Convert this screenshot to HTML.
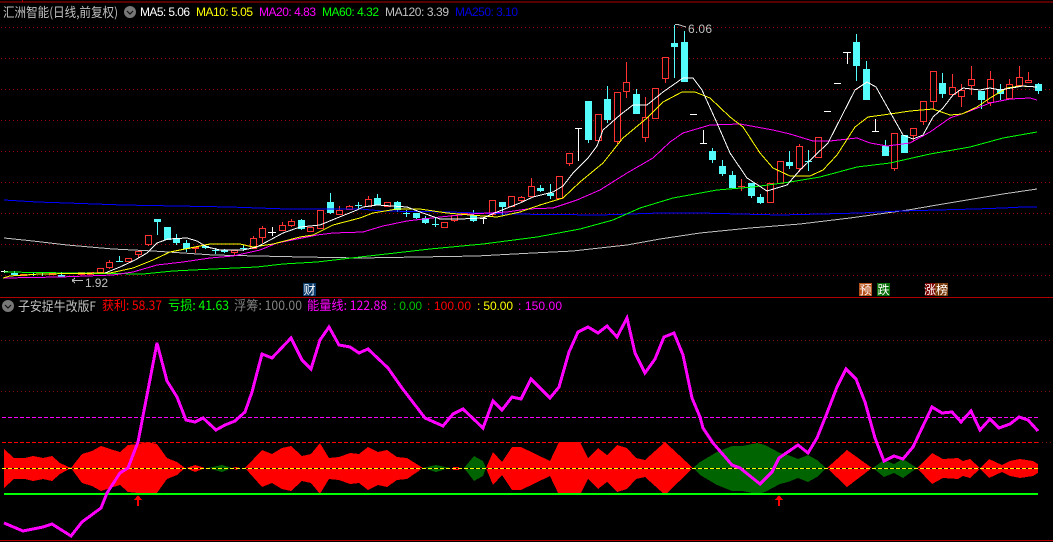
<!DOCTYPE html>
<html><head><meta charset="utf-8"><style>
html,body{margin:0;padding:0;background:#000;width:1053px;height:542px;overflow:hidden}
svg{display:block}
text{font-family:"Liberation Sans","WenQuanYi Zen Hei","Noto Sans CJK SC",sans-serif;font-size:12px}
.cj{font-family:"WenQuanYi Zen Hei","Noto Sans CJK SC",sans-serif;font-size:13px}
</style></head><body>
<svg width="1053" height="542" viewBox="0 0 1053 542" xmlns="http://www.w3.org/2000/svg">
<rect width="1053" height="542" fill="#000"/>
<g shape-rendering="crispEdges" fill="none">
<path d="M0 2H1053M22.5 0V2M0 297.5H1053M0 540.5H1053" stroke="#b00000"/>
<path d="M1 27.5H1053M1 58.5H1053M1 89.5H1053M1 120.5H1053M1 151.5H1053M1 182.5H1053M1 213.5H1053M1 244.5H1053M1 275.5H1053" stroke="#a00000" stroke-dasharray="1 3"/>
<path d="M1 340.5H1053M1 391.5H1053M1038 442.5H1053" stroke="#7a1500" stroke-dasharray="1 3"/>

<!-- red candles -->
<path stroke="#ff3232" fill="#000" d="M20.5 274.5h6V275.5h-6zM49.5 273.5h6V274.5h-6zM78.5 272.5h6V274.5h-6zM87.5 272.5h6V274.5h-6zM97.5 268.5h6V272.5h-6zM106.5 262.5h6V267.5h-6zM125.5 258.5h6V261.5h-6zM135.5 251.5h6V254.5h-6zM145.5 235.5h6V244.5h-6zM192.5 247.5h6V248.5h-6zM231.5 250.5h6V252.5h-6zM250.5 238.5h6V248.5h-6zM259.5 228.5h6V237.5h-6zM279.5 225.5h6V230.5h-6zM288.5 221.5h6V225.5h-6zM307.5 227.5h6V231.5h-6zM317.5 210.5h6V228.5h-6zM336.5 210.5h6V214.5h-6zM346.5 206.5h6V209.5h-6zM365.5 199.5h6V206.5h-6zM384.5 202.5h6V206.5h-6zM441.5 222.5h6V227.5h-6zM451.5 215.5h6V220.5h-6zM461.5 213.5h6V214.5h-6zM489.5 200.5h6V214.5h-6zM508.5 196.5h6V206.5h-6zM518.5 197.5h6V200.5h-6zM528.5 186.5h6V196.5h-6zM556.5 176.5h6V198.5h-6zM566.5 153.5h6V163.5h-6zM595.5 114.5h6V140.5h-6zM614.5 92.5h6V141.5h-6zM623.5 82.5h6V91.5h-6zM642.5 117.5h6V137.5h-6zM652.5 88.5h6V118.5h-6zM662.5 57.5h6V78.5h-6zM767.5 183.5h6V202.5h-6zM777.5 161.5h6V183.5h-6zM796.5 146.5h6V168.5h-6zM815.5 137.5h6V157.5h-6zM891.5 133.5h6V168.5h-6zM910.5 128.5h6V135.5h-6zM920.5 101.5h6V121.5h-6zM930.5 71.5h6V101.5h-6zM949.5 87.5h6V94.5h-6zM958.5 90.5h6V96.5h-6zM968.5 79.5h6V85.5h-6zM987.5 79.5h6V102.5h-6zM1006.5 84.5h6V98.5h-6zM1016.5 77.5h6V85.5h-6zM1025.5 80.5h6V82.5h-6z"/>
<path stroke="#ff3232" d="M109.5 260V262M109.5 268V269M138.5 255V258M148.5 245V246M195.5 249V253M234.5 253V255M253.5 236V238M262.5 226V228M262.5 238V243M282.5 222V225M291.5 219V221M291.5 226V227M339.5 206V210M349.5 205V206M368.5 196V199M454.5 221V222M492.5 215V217M521.5 196V197M521.5 201V203M531.5 178V186M569.5 164V166M617.5 142V144M626.5 62V82M626.5 92V98M645.5 97V117M645.5 138V142M665.5 79V83M741.5 179V191M738 186.5H745M799.5 144V146M799.5 169V172M894.5 169V171M913.5 136V141M923.5 122V125M933.5 102V109M952.5 74V87M952.5 95V96M961.5 84V90M961.5 97V107M971.5 66V79M971.5 86V95M990.5 71V79M990.5 103V106M1009.5 79V84M1019.5 66V77M1028.5 72V80"/>

<!-- cyan wicks -->
<path stroke="#54fcfc" d="M14.5 271V275M33.5 272V276M42.5 272V276M61.5 272V277M119.5 256V262M116 261.5H123M157.5 222V235M176.5 234V245M186.5 240V252M205.5 245V249M215.5 248V254M212 250.5H219M224.5 249V253M243.5 245V251M240 248.5H247M301.5 219V230M330.5 193V214M358.5 202V209M355 205.5H362M377.5 194V198M397.5 201V212M406.5 210V217M403 213.5H410M416.5 218V219M425.5 216V224M435.5 218V227M432 224.5H439M473.5 210V222M502.5 207V215M540.5 185V192M550.5 184V199M588.5 140V143M607.5 86V123M636.5 89V94M674.5 25V78M684.5 31V42M712.5 148V163M722.5 160V176M732.5 171V189M751.5 196V198M760.5 194V204M789.5 151V169M808.5 150V171M805 161.5H812M856.5 34V81M866.5 61V69M885.5 140V146M942.5 73V98M981.5 100V109M1000.5 84V100M1038.5 83V94"/>
<!-- cyan bodies -->
<path stroke="#54fcfc" stroke-width="7" d="M14.5 273V275M61.5 275V277M157.5 219V222M167.5 227V240M176.5 239V243M186.5 243V249M205.5 246V248M224.5 250V252M301.5 220V229M330.5 202V213M377.5 198V205M397.5 202V210M416.5 213V218M425.5 218V223M473.5 215V221M502.5 202V207M540.5 188V191M550.5 193V196M588.5 101V140M607.5 99V120M636.5 94V114M674.5 43V47M684.5 42V82M712.5 151V160M722.5 166V174M732.5 175V188M751.5 183V196M760.5 197V203M789.5 162V166M856.5 42V66M866.5 69V100M885.5 146V156M904.5 135V153M942.5 83V94M981.5 91V100M1000.5 89V94M1038.5 84V91"/>
<!-- white doji -->
<path stroke="#fff" d="M1 271.5H8M4.5 270V273M268 232.5H276M272.5 227V236M480 218.5H487M483.5 217V224M575 128.5H582M578.5 128V161M690 114.5H697M703.5 130V143M700 143.5H707M824 111.5H831M834 83.5H841M843 52.5H851M847.5 52V64M875.5 119V131M872 131.5H879"/>

<!-- moving averages -->
<polyline stroke="#c0c0c0" stroke-width="1" points="4,238 33,241 67,245 113,249 153,251 213,255 303,257 360,258 477,256 533,253 573,251 627,245 660,239 700,233 750,228 800,224 850,218 908,210 937,205 1003,194 1037,189"/>
<polyline stroke="#0000ff" stroke-width="1" points="4,200 37,202 67,203 123,205 230,207 287,209 360,209 383,211 450,212 507,214 600,215 660,213 700,213 780,215 860,213 900,211 975,209 1003,208 1023,207 1037,207"/>
<polyline stroke="#00ff00" stroke-width="1" points="4,272 143,274 173,271 213,269 257,267 283,264 317,262 360,257 430,249 483,244 537,237 580,229 613,220 640,208 673,198 717,190 753,187 790,182 820,177 857,167 890,163 930,154 970,147 1003,138 1037,132"/>
<polyline stroke="#ff00ff" stroke-width="1" points="4,278 60,277 113,275 133,272 157,265 183,262 210,258 233,256 260,250 277,243 317,235 333,233 363,232 383,226 407,221 440,217 470,214 507,212 527,209 553,208 577,200 600,190 627,173 653,158 670,142 683,133 710,125 740,124 773,130 790,134 813,141 830,141 857,138 870,143 887,146 910,143 930,132 950,118 970,111 990,103 1010,99 1030,98 1037,100"/>
<polyline stroke="#ffff00" stroke-width="1" points="3,278 10,276 40,274 110,273 133,268 153,260 170,252 190,248 210,244 240,244 253,247 273,244 300,237 313,235 333,225 360,218 373,213 397,209 420,209 447,213 470,215 497,217 520,212 540,205 563,198 580,182 603,163 623,138 647,118 663,102 682,92 695,92 710,98 730,117 743,127 760,153 773,168 790,176 810,176 823,170 837,155 855,127 868,117 890,114 910,111 933,109 950,115 962,114 977,107 990,98 1007,88 1020,86 1037,87"/>
<polyline stroke="#ffffff" stroke-width="1" points="105,273 120,267 135,260 147,253 157,243 168,239 187,238 197,241 207,247 220,250 243,250 257,247 283,233 300,227 320,225 337,218 357,210 363,207 377,205 407,207 420,212 440,219 460,219 483,218 497,212 520,203 533,197 553,192 563,186 573,173 588,158 597,146 603,130 620,115 633,105 647,105 663,92 683,78 693,78 702,90 717,123 730,153 747,178 767,191 787,185 800,170 828,143 855,90 867,82 876,87 903,135 913,139 923,135 933,117 943,108 953,95 963,88 980,90 990,88 1000,90 1023,86 1037,87"/>

<!-- lower pane envelope -->
<g stroke="none">
<polygon fill="#ff0000" points="4,449 14,458 25,458 33,456 43,458 52,456 60,463 71,468 60,474 52,481 43,479 33,481 25,479 14,479 4,488"/>
<polygon fill="#ff0000" points="71,468 82,454 92,451 101,446 110,449 120,452 128,445 138,444 147,442 157,444 167,458 177,462 185,468 177,475 167,479 157,493 147,495 138,493 128,492 120,485 110,488 101,491 92,486 82,483"/>
<polygon fill="#ff0000" points="186,468 195,465 205,468 195,472"/>
<polygon fill="#006400" points="207,468 222,465 232,468 222,472"/>
<polygon fill="#ff0000" points="232,468 236,467 240,468 236,470"/>
<polygon fill="#ff0000" points="245,468 262,450 272,454 282,448 291,446 302,456 311,454 320,443 329,458 339,457 350,453 359,454 368,447 378,452 387,450 397,457 407,458 423,468 407,479 397,480 387,487 378,485 368,490 359,483 350,484 339,480 329,479 320,494 311,483 302,481 291,491 282,489 272,483 262,487"/>
<polygon fill="#006400" points="423,468 436,465 450,468 436,472"/>
<polygon fill="#ff0000" points="453,467 459,467 459,470 453,470"/>
<polygon fill="#006400" points="464,468 474,456 483,461 486,468 483,476 474,481"/>
<polygon fill="#ff0000" points="486,468 493,452 502,462 512,447 521,447 550,461 559,442 580,442 588,458 598,448 607,455 617,445 627,448 636,458 645,460 665,442 693,468 665,495 645,477 636,479 627,489 617,492 607,482 598,489 588,479 580,495 559,495 550,476 521,490 512,490 502,475 493,485"/>
<polygon fill="#006400" points="693,468 700,462 717,452 732,446 742,446 757,443 765,445 780,453 788,455 798,459 808,455 817,460 826,468 817,477 808,482 798,478 788,482 780,484 765,492 757,494 742,491 732,491 717,485 700,475"/>
<polygon fill="#ff0000" points="827,468 847,450 872,468 847,487"/>
<polygon fill="#006400" points="873,468 884,460 894,464 903,459 917,468 903,478 894,473 884,477"/>
<polygon fill="#ff0000" points="917,468 932,453 943,459 958,458 963,461 970,459 980,468 989,459 1002,465 1010,461 1020,459 1033,461 1038,464 1038,473 1033,476 1020,478 1010,476 1002,472 989,478 980,469 970,478 963,476 958,479 943,478 932,484"/>
</g>
<path stroke="#ff00ff" stroke-dasharray="4 2" d="M2 417.5H1038"/>
<path stroke="#ff0000" stroke-dasharray="4 2" d="M2 442.5H1038"/>
<path stroke="#000" d="M2 468.5H1038"/>
<path stroke="#ffff00" stroke-dasharray="4 2" d="M2 468.5H1038"/>
<path stroke="#00ff00" stroke-width="2" d="M4 494H1038"/>
<polyline stroke="#ff00ff" stroke-width="3" points="4,523 23,531 43,527 52,524 71,536 82,522 101,508 107,493 120,473 128,468 138,442 157,343 167,381 177,397 186,420 195,422 203,418 216,430 225,425 235,421 245,412 252,392 262,354 272,358 291,338 302,360 311,369 320,340 329,327 339,345 350,347 359,353 368,349 388,368 402,388 425,418 443,426 453,414 463,409 483,428 493,401 502,410 512,397 521,399 531,379 550,398 559,387 569,352 578,332 588,327 598,333 607,326 617,337 627,318 635,353 645,373 655,359 664,337 674,333 683,355 692,398 700,417 703,428 713,443 732,465 740,468 760,484 772,472 779,458 798,445 808,453 817,438 827,413 837,387 846,369 856,379 865,402 875,438 884,461 894,456 903,459 913,447 932,407 942,413 952,412 961,422 971,411 980,430 990,419 999,428 1010,424 1019,417 1028,420 1038,431"/>
<polygon fill="#ff0000" points="134,500 138,495 142,500 139,500 139,506 137,506 137,500"/>
<polygon fill="#ff0000" points="775,500 779,495 783,500 780,500 780,506 778,506 778,500"/>
<path stroke="#c0c0c0" d="M72 280.5H83M72 280.5L75 278M72 280.5L75 283M675 24.5H678M678 24.5L686 27"/>
<!-- signal tags -->
<rect x="303" y="283" width="13" height="13" fill="#0a3a6a" stroke="none"/>
<rect x="859" y="283" width="13" height="13" fill="#b5521b" stroke="none"/>
<rect x="877" y="283" width="13" height="13" fill="#0a6e0a" stroke="none"/>
<rect x="925" y="283" width="10" height="13" fill="#7a0000" stroke="none"/>
<rect x="935" y="283" width="13" height="13" fill="#7a3a0a" stroke="none"/>
</g>

<!-- header icons -->
<circle cx="130" cy="12" r="6" fill="#777"/><path d="M127 11l3 3 3-3" stroke="#111" stroke-width="1.2" fill="none"/>
<circle cx="8" cy="306" r="6" fill="#777"/><path d="M5 305l3 3 3-3" stroke="#111" stroke-width="1.2" fill="none"/>

<!-- text -->
<text class="cj" x="3" y="17" fill="#c0c0c0" textLength="115" lengthAdjust="spacingAndGlyphs">汇洲智能(日线,前复权)</text>
<text x="140" y="16" fill="#ffffff" textLength="50">MA5: 5.06</text>
<text x="196" y="16" fill="#ffff00" textLength="57">MA10: 5.05</text>
<text x="259" y="16" fill="#ff00ff" textLength="57">MA20: 4.83</text>
<text x="322" y="16" fill="#00ff00" textLength="57">MA60: 4.32</text>
<text x="385" y="16" fill="#c0c0c0" textLength="64">MA120: 3.39</text>
<text x="455" y="16" fill="#0000e0" textLength="63">MA250: 3.10</text>
<text class="cj" x="18" y="311" fill="#c0c0c0" textLength="78" lengthAdjust="spacingAndGlyphs">子安捉牛改版F</text>
<text class="cj" x="102" y="310" fill="#ff0000" textLength="60" lengthAdjust="spacingAndGlyphs">获利: 58.37</text>
<text class="cj" x="168" y="310" fill="#00ff00" textLength="61" lengthAdjust="spacingAndGlyphs">亏损: 41.63</text>
<text class="cj" x="234" y="310" fill="#808080" textLength="68" lengthAdjust="spacingAndGlyphs">浮筹: 100.00</text>
<text class="cj" x="307" y="310" fill="#ff00ff" textLength="80" lengthAdjust="spacingAndGlyphs">能量线: 122.88</text>
<text x="393" y="310" fill="#00c000" textLength="29">: 0.00</text>
<text x="427" y="310" fill="#ff0000" textLength="44">: 100.00</text>
<text x="477" y="310" fill="#ffff00" textLength="36">: 50.00</text>
<text x="518" y="310" fill="#ff00ff" textLength="44">: 150.00</text>
<text x="85" y="287" fill="#c0c0c0" textLength="23">1.92</text>
<text x="688" y="33" fill="#c0c0c0" textLength="24">6.06</text>
<text class="cj" x="303.5" y="294" fill="#fff" style="font-size:12px">财</text>
<text class="cj" x="859.5" y="294" fill="#fff" style="font-size:12px">预</text>
<text class="cj" x="877.5" y="294" fill="#fff" style="font-size:12px">跌</text>
<text class="cj" x="924" y="294" fill="#fff" style="font-size:12px">涨</text>
<text class="cj" x="936" y="294" fill="#fff" style="font-size:12px">榜</text>
</svg>
</body></html>
